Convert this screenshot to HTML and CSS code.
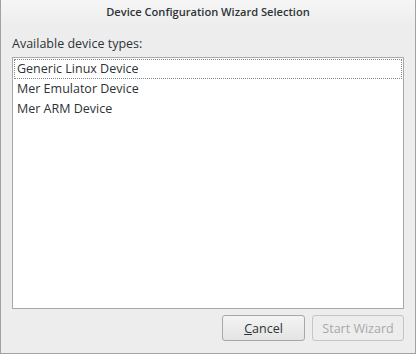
FILE: index.html
```html
<!DOCTYPE html>
<html>
<head>
<meta charset="utf-8">
<link rel="stylesheet" href="styles.css">
</head>
<body>
<div class="window">
  <div class="titlebar">Device Configuration Wizard Selection</div>
  <div class="content">
    <div class="label">Available device types:</div>
    <div class="list">
      <div class="item focused">Generic Linux Device</div>
      <div class="item">Mer Emulator Device</div>
      <div class="item">Mer ARM Device</div>
    </div>
    <div class="buttons">
      <button class="btn"><u>C</u>ancel</button>
      <button class="btn disabled">Start Wizard</button>
    </div>
  </div>
</div>
</body>
</html>
```
FILE: styles.css
```css
html, body {
  margin: 0;
  padding: 0;
}
body {
  width: 416px;
  height: 354px;
  font-family: "Open Sans", sans-serif;
  color: #2e3436;
}
.window {
  box-sizing: border-box;
  width: 416px;
  height: 354px;
  border: 1px solid #a2a2a2;
  border-top: none;
  background: #ededed;
  display: flex;
  flex-direction: column;
}
.titlebar {
  height: 26px;
  line-height: 24px;
  text-align: center;
  font-size: 11.1px;
  font-weight: 600;
  color: #2e3436;
  background: linear-gradient(#f6f6f6, #ededed);
}
.content {
  flex: 1;
  display: flex;
  flex-direction: column;
  padding: 9px 11px 12px 11px;
}
.label {
  font-size: 12.5px;
  line-height: 17px;
  margin-bottom: 5px;
}
.list {
  flex: 1;
  background: #fff;
  border: 1px solid #a8a8a8;
  padding: 1px;
}
.item {
  font-size: 12.5px;
  height: 20px;
  line-height: 19px;
  padding-left: 3px;
  box-sizing: border-box;
}
.item.focused {
  border: 1px dotted #888;
  padding-left: 2px;
  line-height: 17px;
}
.buttons {
  display: flex;
  justify-content: flex-end;
  gap: 7px;
  margin-top: 6px;
}
.btn {
  font-family: inherit;
  font-size: 12.5px;
  height: 26px;
  border: 1px solid #a8a8a8;
  border-radius: 3px;
  background: linear-gradient(#f4f4f4, #e4e4e4);
  color: #2e3436;
  padding: 0;
  width: 83px;
}
.btn.disabled {
  width: 92px;
  background: #ededed;
  border-color: #c5c5c5;
  color: #a9a9a9;
}
```
